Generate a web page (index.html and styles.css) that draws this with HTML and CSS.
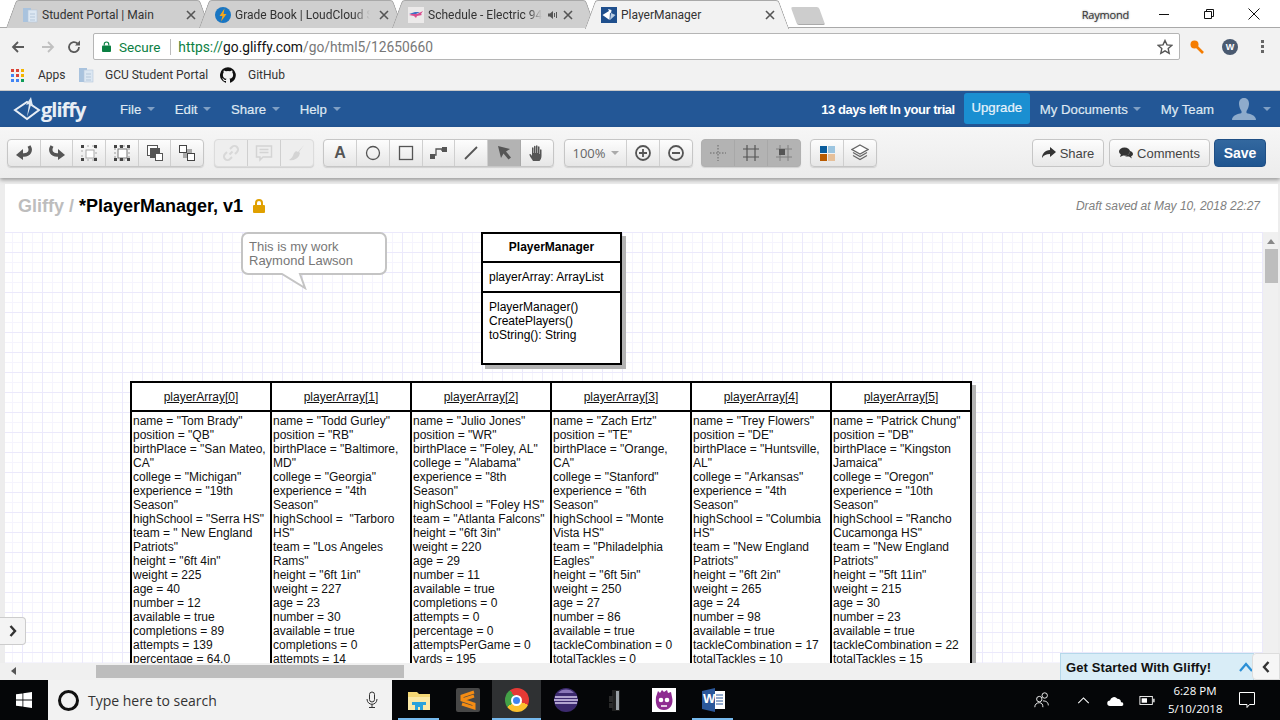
FILE: index.html
```html
<!DOCTYPE html>
<html>
<head>
  <title>PlayerManager</title>
  <link rel="stylesheet" href="styles.css">
</head>
<body>
  <div id="app">
    <div class="tabstrip">
      <div class="tab">
        <svg class="favicon" viewBox="0 0 16 16"><rect x="1" y="1" width="8" height="14" fill="#a9c3de"/><rect x="6" y="3" width="9" height="12" fill="#dce7f2" stroke="#b5c7da" stroke-width=".6"/><path d="M8 7h5M8 10h5M8 13h5" stroke="#b5c7da"/></svg>
        <span class="tab-title">Student Portal | Main</span>
        <svg class="tab-x" viewBox="0 0 10 10"><path d="M1 1l8 8M9 1l-8 8"/></svg>
      </div>
      <div class="tab">
        <svg class="favicon" viewBox="0 0 16 16"><circle cx="8" cy="8" r="8" fill="#1a76c2"/><path d="M9.500 1.500L4.500 9h3l-1.500 5.500L11.500 7h-3z" fill="#f6a71b"/></svg>
        <span class="tab-title tab-fade">Grade Book | LoudCloud S</span>
        <svg class="tab-x" viewBox="0 0 10 10"><path d="M1 1l8 8M9 1l-8 8"/></svg>
      </div>
      <div class="tab">
        <svg class="favicon" viewBox="0 0 16 16"><rect width="16" height="16" fill="#eceaea"/><path d="M1 8l5-2 3 1 6-3-2 3 1 1-5 1-1 2-2-2z" fill="#d84f8f"/><path d="M1 7l6-2 5 0-4 2z" fill="#3f6fc4"/></svg>
        <span class="tab-title tab-fade tab-title-short">Schedule - Electric 94.</span>
        <svg class="tab-audio" viewBox="0 0 10 10"><path d="M0 3.500h2L5 1v8L2 6.500H0z"/><path d="M6.500 3v4M8.500 2v6" stroke="#555"/></svg>
        <svg class="tab-x" viewBox="0 0 10 10"><path d="M1 1l8 8M9 1l-8 8"/></svg>
      </div>
      <div class="tab tab-active">
        <svg class="favicon" viewBox="0 0 16 16"><rect width="16" height="16" fill="#1f4f8d"/><path d="M1.500 8L8 4l-1-2 3.500 1L10 6.500 9 5.500 8.500 13z" fill="#fff"/><path d="M10 6l4.500 2L9 13z" fill="#b9cde3"/></svg>
        <span class="tab-title">PlayerManager</span>
        <svg class="tab-x" viewBox="0 0 10 10"><path d="M1 1l8 8M9 1l-8 8"/></svg>
      </div>
      <div class="newtab"></div>
      <div class="winbar">
        <span class="profile">Raymond</span>
        <span class="winbtn"><svg viewBox="0 0 12 12"><path d="M1 6.500h10"/></svg></span>
        <span class="winbtn"><svg viewBox="0 0 12 12"><path d="M1.500 3.500h7v7h-7zM3.500 3.500v-2h7v7h-2"/></svg></span>
        <span class="winbtn"><svg viewBox="0 0 12 12"><path d="M.5.5l11 11M11.500.5l-11 11"/></svg></span>
      </div>
    </div>

    <div class="omnibar">
      <svg class="nav-ico" viewBox="0 0 16 16"><path d="M14 8H3M8 3L3 8l5 5" class="ln-dark"/></svg>
      <svg class="nav-ico" viewBox="0 0 16 16"><path d="M2 8h11M8 3l5 5-5 5" class="ln-light"/></svg>
      <svg class="nav-ico nav-reload" viewBox="0 0 16 16"><path d="M13 8a5 5 0 1 1-1.500-3.500" class="ln-dark"/><path d="M14 1.500v5h-5z" fill="#5a5a5a"/></svg>
      <div class="address">
        <svg class="lock-ico" viewBox="0 0 10 12"><path d="M2.500 5V3.500a2.500 2.500 0 0 1 5 0V5" fill="none" stroke="#0b8043" stroke-width="1.300"/><rect y="5" width="10" height="7" rx="1" fill="#0b8043"/></svg>
        <span class="secure">Secure</span>
        <span class="addr-sep"></span>
        <span class="url"><span class="url-green">https://</span>go.gliffy.com<span class="url-dim">/go/html5/12650660</span></span>
        <svg class="star-ico" viewBox="0 0 16 16"><path d="M8 1.500l2 4.400 4.800.5-3.600 3.200 1 4.700L8 11.900l-4.200 2.400 1-4.700L1.200 6.400 6 5.900z"/></svg>
      </div>
      <svg class="ext-ico" viewBox="0 0 16 16"><circle cx="5.500" cy="5.500" r="4" fill="#f57c00"/><path d="M7 7l7 7" stroke="#f57c00" stroke-width="2.600"/></svg>
      <span class="ext-w">W</span>
      <span class="dots"><i></i><i></i><i></i></span>
    </div>

    <div class="bookmarks">
      <span class="apps-grid"><i class="c1"></i><i class="c2"></i><i class="c3"></i><i class="c4"></i><i class="c5"></i><i class="c6"></i><i class="c7"></i><i class="c8"></i><i class="c9"></i></span>
      <span class="bm bm-apps">Apps</span>
      <svg class="favicon" viewBox="0 0 16 16"><rect x="1" y="1" width="8" height="14" fill="#a9c3de"/><rect x="6" y="3" width="9" height="12" fill="#dce7f2" stroke="#b5c7da" stroke-width=".6"/><path d="M8 7h5M8 10h5M8 13h5" stroke="#b5c7da"/></svg>
      <span class="bm bm-gcu">GCU Student Portal</span>
      <svg class="favicon" viewBox="0 0 16 16"><path d="M8 .2a8 8 0 0 0-2.500 15.600c.4.100.5-.2.500-.4v-1.400c-2.200.5-2.700-1-2.700-1-.4-.9-.9-1.200-.9-1.200-.7-.5.100-.5.100-.5.800.100 1.200.8 1.200.8.700 1.200 1.900.9 2.300.7.100-.5.300-.9.500-1.100-1.800-.2-3.600-.9-3.600-4 0-.9.300-1.600.8-2.100-.1-.2-.4-1 .1-2.100 0 0 .7-.2 2.200.8a7.600 7.600 0 0 1 4 0c1.500-1 2.200-.8 2.200-.8.500 1.100.2 1.900.1 2.100.5.600.8 1.300.8 2.100 0 3.100-1.900 3.700-3.700 3.900.3.300.6.700.6 1.500v2.200c0 .2.100.5.600.4A8 8 0 0 0 8 .2z" fill="#111"/></svg>
      <span class="bm bm-git">GitHub</span>
    </div>

    <div class="gnav">
      <svg class="glogo" viewBox="0 0 28 28"><path d="M2 15L14 7l12 8-12 9z" fill="none" stroke="#e8eef5" stroke-width="2"/><path d="M14 22l2-13-3 1 5-8 2 9-2-1z" fill="#dfe8f2"/></svg>
      <span class="gword">gliffy</span>
      <span class="gmenu gm-file">File<i class="caret"></i></span>
      <span class="gmenu gm-next">Edit<i class="caret"></i></span>
      <span class="gmenu gm-next">Share<i class="caret"></i></span>
      <span class="gmenu gm-next">Help<i class="caret"></i></span>
      <span class="trial">13 days left In your trial</span>
      <span class="upgrade">Upgrade</span>
      <span class="gmenu">My Documents<i class="caret caret-docs"></i></span>
      <span class="gmenu gm-team">My Team</span>
      <svg class="user-ico" viewBox="0 0 24 22"><path d="M12 0c3.500 0 5 2.500 5 5.500S15.500 12 14.500 13v2c3 1 9.500 2 9.500 7H0c0-5 6.500-6 9.500-7v-2C8.500 12 7 8.500 7 5.500S8.500 0 12 0z" fill="#8eabcb"/></svg>
      <i class="caret"></i>
    </div>

    <div class="tools">
      <div class="bgroup g-edit">
        <span class="btn"><svg viewBox="0 0 18 18" class="ico"><path d="M14 2c3 5 0 9-5 9H7" fill="none" stroke="#555" stroke-width="3.400"/><path d="M8 5v11l-7-5z" fill="#555"/></svg></span>
        <span class="btn"><svg viewBox="0 0 18 18" class="ico"><path d="M4 2c-3 5 0 9 5 9h2" fill="none" stroke="#555" stroke-width="3.400"/><path d="M10 5v11l7-5z" fill="#555"/></svg></span>
        <span class="btn"><svg viewBox="0 0 18 18" class="ico"><path d="M2 2h14v14H2z" fill="none" stroke="#aaa" stroke-dasharray="2 3"/><rect x="6" y="6" width="8" height="8" fill="#fff" stroke="#aaa"/><path d="M1 1h3v3H1zM14 1h3v3h-3zM1 14h3v3H1zM14 14h3v3h-3z" fill="#444"/></svg></span>
        <span class="btn"><svg viewBox="0 0 18 18" class="ico"><path d="M2 2h14v14H2z" fill="none" stroke="#999" stroke-dasharray="2 2"/><rect x="5" y="5" width="9" height="9" fill="#fff" stroke="#777"/><path d="M1 1h3v3H1zM14 1h3v3h-3zM1 14h3v3H1zM14 14h3v3h-3zM7 1h3v3H7zM7 14h3v3H7z" fill="#444"/></svg></span>
        <span class="btn"><svg viewBox="0 0 18 18" class="ico"><rect x="1.500" y="1.500" width="10" height="10" fill="#fff" stroke="#555"/><rect x="4" y="4" width="10" height="10" fill="#555"/><rect x="9.500" y="9.500" width="7" height="7" fill="#fff" stroke="#555"/></svg></span>
        <span class="btn"><svg viewBox="0 0 18 18" class="ico"><rect x="5" y="5" width="9" height="9" fill="#aaa"/><rect x="1.500" y="1.500" width="7" height="7" fill="#fff" stroke="#444"/><rect x="9.500" y="9.500" width="7" height="7" fill="#fff" stroke="#444"/></svg></span>
      </div>
      <div class="bgroup g-disabled">
        <span class="btn"><svg viewBox="0 0 18 18" class="ico"><path d="M7.500 10.500l3-3M8 5l2-2a3 3 0 0 1 5 5l-2 2M10 13l-2 2a3 3 0 0 1-5-5l2-2" fill="none" stroke="#d8d8d8" stroke-width="2"/></svg></span>
        <span class="btn"><svg viewBox="0 0 18 18" class="ico"><path d="M1.500 2h15v11H8l-3 3v-3H1.500z" fill="none" stroke="#d4d4d4" stroke-width="1.500"/><path d="M4.500 5.500h9M4.500 8.500h9" stroke="#d4d4d4" stroke-width="1.300"/></svg></span>
        <span class="btn"><svg viewBox="0 0 18 18" class="ico"><path d="M16 1l-6 7-2-1-2 2c-1 3-2 5-5 7 4 1 8-1 10-4l1-3-1-1z" fill="#d4d4d4"/></svg></span>
      </div>
      <div class="bgroup g-shapes">
        <span class="btn btn-a">A</span>
        <span class="btn"><svg viewBox="0 0 18 18" class="ico"><circle cx="9" cy="9" r="6.500" fill="none" stroke="#555" stroke-width="1.300"/></svg></span>
        <span class="btn"><svg viewBox="0 0 18 18" class="ico"><rect x="2.500" y="2.500" width="13" height="13" fill="none" stroke="#555" stroke-width="1.300"/></svg></span>
        <span class="btn"><svg viewBox="0 0 18 18" class="ico"><path d="M1 11h5V5h6v2" fill="none" stroke="#555" stroke-width="1.300"/><rect y="10" width="5" height="5" fill="#555"/><rect x="12" y="3" width="5" height="5" fill="#555"/></svg></span>
        <span class="btn"><svg viewBox="0 0 18 18" class="ico"><path d="M3 15L15 3" stroke="#555" stroke-width="1.800"/></svg></span>
        <span class="btn btn-on"><svg viewBox="0 0 18 18" class="ico"><path d="M3 2l12 3-4 2.500 5 6-2.500 2-5-6L6 14z" fill="#555"/></svg></span>
        <span class="btn"><svg viewBox="0 0 18 18" class="ico"><path d="M5 17c-1-2-3-4-3.500-6-.3-1 .8-1.500 1.500-.5L4 12V4c0-1 1.500-1 1.500 0v5h.5V2.500c0-1 1.500-1 1.500 0V9H8V2c0-1 1.500-1 1.500 0v7h.5V3c0-1 1.500-1 1.500 0v7h.5V6c0-1 1.500-1 1.500 0v6c0 2-1 4-2 5z" fill="#555"/></svg></span>
      </div>
      <div class="bgroup g-zoom">
        <span class="btn btn-pct">100%<i class="caret caret-grey"></i></span>
        <span class="btn"><svg viewBox="0 0 18 18" class="ico"><circle cx="9" cy="9" r="7" fill="none" stroke="#555" stroke-width="1.800"/><path d="M5 9h8M9 5v8" stroke="#555" stroke-width="1.800"/></svg></span>
        <span class="btn"><svg viewBox="0 0 18 18" class="ico"><circle cx="9" cy="9" r="7" fill="none" stroke="#555" stroke-width="1.800"/><path d="M5 9h8" stroke="#555" stroke-width="1.800"/></svg></span>
      </div>
      <div class="bgroup g-snap">
        <span class="btn btn-on"><svg viewBox="0 0 18 18" class="ico"><path d="M1 9h16M9 1v16" stroke="#666" stroke-dasharray="1.500 1.500"/></svg></span>
        <span class="btn btn-on"><svg viewBox="0 0 18 18" class="ico"><path d="M1 5h16M1 13h16M5 1v16M13 1v16" stroke="#555" stroke-width="1.200"/></svg></span>
        <span class="btn btn-on"><svg viewBox="0 0 18 18" class="ico"><path d="M1 5h16M1 13h16M5 1v16M13 1v16" stroke="#808080"/><rect x="4" y="5" width="6" height="6" fill="#555"/></svg></span>
      </div>
      <div class="bgroup g-style">
        <span class="btn"><span class="swatches"><i class="s1"></i><i class="s2"></i><i class="s3"></i><i class="s4"></i></span></span>
        <span class="btn"><svg viewBox="0 0 18 18" class="ico"><path d="M9 1l8 4.500-8 4.500-8-4.500z" fill="#fff" stroke="#666" stroke-width="1.200"/><path d="M2 8.500l7 4 7-4M2 11.500l7 4 7-4" fill="none" stroke="#666" stroke-width="1.200"/></svg></span>
      </div>
      <div class="tools-right">
        <span class="tbtn tb-share"><svg viewBox="0 0 14 12" class="tico"><path d="M8 0l6 5-6 5V7C4 7 2 8 0 11c0-4 3-8 8-8z" fill="#333"/></svg>Share</span>
        <span class="tbtn tb-comments"><svg viewBox="0 0 14 12" class="tico"><ellipse cx="5.500" cy="4.500" rx="5.500" ry="4" fill="#333"/><path d="M2 7L1 10l4-2zM11 4c2 .5 3 2 3 3s-1 2-2 2.500l1 2-3-2c-2 0-4 0-5-1 4 0 6-2 6-4.500z" fill="#333"/></svg>Comments</span>
        <span class="tbtn tb-save">Save</span>
      </div>
    </div>

    <div class="workspace">
      <div class="panel">
        <div class="doc-head">
          <span class="crumb">Gliffy /</span>
          <span class="doc-name">*PlayerManager, v1</span>
          <svg class="doc-lock" viewBox="0 0 12 14"><path d="M3 6V4a3 3 0 0 1 6 0v2" fill="none" stroke="#e0a000" stroke-width="2"/><rect y="6" width="12" height="8" rx="1" fill="#e0a000"/></svg>
          <span class="draft">Draft saved at May 10, 2018 22:27</span>
        </div>
        <div class="canvas-row">
          <div class="canvas">
            <div class="bubble">
              <svg class="bubble-shape" viewBox="0 0 148 58"><path d="M7 1h132a6 6 0 0 1 6 6v29a6 6 0 0 1-6 6H59l5 14L41 42H7a6 6 0 0 1-6-6V7a6 6 0 0 1 6-6z" fill="#fff" stroke="#c4c4c4" stroke-width="2"/></svg>
              <span class="bubble-text">This is my work<br>Raymond Lawson</span>
            </div>

            <div class="uml">
              <div class="uml-title">PlayerManager</div>
              <div class="uml-attrs">playerArray: ArrayList</div>
              <div class="uml-methods">PlayerManager()<br>CreatePlayers()<br>toString(): String</div>
            </div>

            <div class="objects">
              <div class="obj">
                <div class="obj-head">playerArray[0]</div>
                <div class="obj-body">
                  <p>name = "Tom Brady"</p><p>position = "QB"</p><p>birthPlace = "San Mateo, CA"</p><p>college = "Michigan"</p><p>experience = "19th Season"</p><p>highSchool = "Serra HS"</p><p>team = " New England Patriots"</p><p>height = "6ft 4in"</p><p>weight = 225</p><p>age = 40</p><p>number = 12</p><p>available = true</p><p>completions = 89</p><p>attempts = 139</p><p>percentage = 64.0</p>
                </div>
              </div>
              <div class="obj">
                <div class="obj-head">playerArray[1]</div>
                <div class="obj-body">
                  <p>name = "Todd Gurley"</p><p>position = "RB"</p><p>birthPlace = "Baltimore, MD"</p><p>college = "Georgia"</p><p>experience = "4th Season"</p><p>highSchool = &nbsp;"Tarboro HS"</p><p>team = "Los Angeles Rams"</p><p>height = "6ft 1in"</p><p>weight = 227</p><p>age = 23</p><p>number = 30</p><p>available = true</p><p>completions = 0</p><p>attempts = 14</p>
                </div>
              </div>
              <div class="obj">
                <div class="obj-head">playerArray[2]</div>
                <div class="obj-body">
                  <p>name = "Julio Jones"</p><p>position = "WR"</p><p>birthPlace = "Foley, AL"</p><p>college = "Alabama"</p><p>experience = "8th Season"</p><p>highSchool = "Foley HS"</p><p>team = "Atlanta Falcons"</p><p>height = "6ft 3in"</p><p>weight = 220</p><p>age = 29</p><p>number = 11</p><p>available = true</p><p>completions = 0</p><p>attempts = 0</p><p>percentage = 0</p><p>attemptsPerGame = 0</p><p>yards = 195</p>
                </div>
              </div>
              <div class="obj">
                <div class="obj-head">playerArray[3]</div>
                <div class="obj-body">
                  <p>name = "Zach Ertz"</p><p>position = "TE"</p><p>birthPlace = "Orange, CA"</p><p>college = "Stanford"</p><p>experience = "6th Season"</p><p>highSchool = "Monte Vista HS"</p><p>team = "Philadelphia Eagles"</p><p>height = "6ft 5in"</p><p>weight = 250</p><p>age = 27</p><p>number = 86</p><p>available = true</p><p>tackleCombination = 0</p><p>totalTackles = 0</p>
                </div>
              </div>
              <div class="obj">
                <div class="obj-head">playerArray[4]</div>
                <div class="obj-body">
                  <p>name = "Trey Flowers"</p><p>position = "DE"</p><p>birthPlace = "Huntsville, AL"</p><p>college = "Arkansas"</p><p>experience = "4th Season"</p><p>highSchool = "Columbia HS"</p><p>team = "New England Patriots"</p><p>height = "6ft 2in"</p><p>weight = 265</p><p>age = 24</p><p>number = 98</p><p>available = true</p><p>tackleCombination = 17</p><p>totalTackles = 10</p>
                </div>
              </div>
              <div class="obj">
                <div class="obj-head">playerArray[5]</div>
                <div class="obj-body">
                  <p>name = "Patrick Chung"</p><p>position = "DB"</p><p>birthPlace = "Kingston Jamaica"</p><p>college = "Oregon"</p><p>experience = "10th Season"</p><p>highSchool = "Rancho Cucamonga HS"</p><p>team = "New England Patriots"</p><p>height = "5ft 11in"</p><p>weight = 215</p><p>age = 30</p><p>number = 23</p><p>available = true</p><p>tackleCombination = 22</p><p>totalTackles = 15</p>
                </div>
              </div>
            </div>
          </div>
          <div class="vscroll"><i class="arrow-up"></i><div class="vthumb"></div></div>
        </div>
      </div>
    </div>

    <div class="hscroll"><i class="arrow-left"></i><div class="hthumb"></div></div>

    <div class="side-toggle"><svg viewBox="0 0 8 12"><path d="M1.500 1l4.500 5-4.500 5" fill="none" stroke="#333" stroke-width="2.400"/></svg></div>
    <div class="started">
      <span>Get Started With Gliffy!</span>
      <svg class="started-up" viewBox="0 0 14 10"><path d="M1 9l6-7 6 7" fill="none" stroke="#2a8fd6" stroke-width="2.200"/></svg>
    </div>
    <div class="started-close"><svg viewBox="0 0 8 12"><path d="M6.500 1L2 6l4.500 5" fill="none" stroke="#333" stroke-width="2.400"/></svg></div>

    <div class="taskbar">
      <div class="startbtn"><svg viewBox="0 0 16 16"><path d="M0 2.300l6.500-.9v6.200H0zM7.300 1.300L16 0v7.600H7.300zM0 8.400h6.500v6.200L0 13.700zM7.300 8.400H16V16l-8.700-1.300z" fill="#fff"/></svg></div>
      <div class="search">
        <span class="cortana"></span>
        <span class="search-text">Type here to search</span>
        <svg class="mic" viewBox="0 0 12 18"><rect x="3.500" y="1" width="5" height="10" rx="2.500" fill="none" stroke="#333"/><path d="M1 8c0 7 10 7 10 0M6 13v3M3 16.500h6" fill="none" stroke="#333"/></svg>
      </div>
      <div class="tb-apps">
        <span class="tbapp tbapp-open">
          <svg viewBox="0 0 24 24"><path d="M1 4h9l2 2h11v16H1z" fill="#f4d774"/><path d="M1 9h22v13H1z" fill="#fbe9a7"/><path d="M8 22v-6h8v6h-3v-3h-2v3z" fill="#29a3dc"/><rect x="5" y="14" width="14" height="3" fill="#29a3dc"/></svg>
        </span>
        <span class="tbapp">
          <svg viewBox="0 0 24 24"><rect width="24" height="24" rx="2" fill="#474747"/><path d="M18 4L6 8v4l12 4v4L6 16M6 12l12-4" fill="none" stroke="#f48c14" stroke-width="3"/></svg>
        </span>
        <span class="tbapp tbapp-active"><span class="chrome-ico"><i></i></span></span>
        <span class="tbapp">
          <svg viewBox="0 0 24 24"><circle cx="12" cy="12" r="12" fill="#3c2a6e"/><path d="M1 9h22M0 12h24M1 15h22" stroke="#d8cdf0" stroke-width="1.300"/><path d="M4 5a11 11 0 0 1 16 0z" fill="#8a77b8"/></svg>
        </span>
        <span class="tbapp">
          <svg viewBox="0 0 24 24"><rect x="9" y="2" width="8" height="21" fill="#202020"/><rect x="13" y="3" width="3" height="19" fill="#9aa0a5"/><rect x="6" y="8" width="4" height="6" fill="#2a2a2a"/><rect x="6" y="15" width="4" height="5" fill="#2a2a2a"/></svg>
        </span>
        <span class="tbapp">
          <svg viewBox="0 0 24 24"><rect width="24" height="24" fill="#fff"/><path d="M4 9l2-6 2 2 2-3 2 2 3-2 1 3 3-1 1 5c2 7-2 13-8 13S3 18 4 9z" fill="#8e2b91"/><circle cx="9" cy="12" r="2.300" fill="#fff"/><circle cx="15" cy="12" r="2.300" fill="#fff"/><path d="M9 18h6" stroke="#fff" stroke-width="1.500"/></svg>
        </span>
        <span class="tbapp tbapp-open word-tile">
          <svg viewBox="0 0 24 24"><rect x="9" y="3" width="15" height="18" fill="#fff"/><path d="M15 7h7M15 10h7M15 13h7M15 16h7" stroke="#2b579a"/><path d="M1 3l13-3v24L1 21z" fill="#2b579a"/></svg>
          <span class="word-w">W</span>
        </span>
      </div>
      <div class="tray">
        <span class="tray-item ti-people"><svg viewBox="0 0 20 20"><circle cx="7" cy="9" r="3" fill="none" stroke="#fff"/><circle cx="13" cy="5" r="3" fill="none" stroke="#fff"/><path d="M2 18c0-3 2-5 5-5s4 2 4 5M11 11c3 0 6 1 6 5" fill="none" stroke="#fff"/></svg></span>
        <span class="tray-item ti-caret"><svg viewBox="0 0 14 8"><path d="M1 7l6-6 6 6" fill="none" stroke="#fff" stroke-width="1.200"/></svg></span>
        <span class="tray-item ti-cloud"><svg viewBox="0 0 18 12"><path d="M3 12a3 3 0 0 1 0-6 4.500 4.500 0 0 1 8-2 4 4 0 0 1 4 4 2 2 0 0 1 1 4z" fill="#fff"/></svg></span>
        <span class="tray-item ti-batt"><svg viewBox="0 0 18 12"><rect x="1" y="1.500" width="14" height="9" fill="none" stroke="#fff"/><rect x="3" y="3.500" width="6" height="5" fill="#fff"/><rect x="16" y="4" width="1.500" height="4" fill="#fff"/></svg></span>
        <span class="clock">6:28 PM<br>5/10/2018</span>
        <span class="tray-item ti-notif"><svg viewBox="0 0 18 18"><path d="M1.500 1.500h15v12h-5l-2.500 3v-3H1.500z" fill="none" stroke="#fff"/></svg></span>
      </div>
    </div>
  </div>
</body>
</html>
```
FILE: styles.css
```css
* {
  box-sizing: border-box;
}
body {
  margin: 0;
  font-family: "Liberation Sans", Arial, sans-serif;
  overflow: hidden;
}
#app {
  position: relative;
  display: flex;
  flex-direction: column;
  width: 1280px;
  height: 720px;
  overflow: hidden;
  background: #fff;
}

/* browser tabs */
.tabstrip {
  position: relative;
  display: flex;
  height: 28px;
  flex: none;
  padding-left: 6px;
  background: #fff;
  border-bottom: 1px solid #a9a9a9;
}
.tab {
  position: relative;
  width: 204px;
  height: 28px;
  margin-right: -11px;
  padding: 1px 0 0 16px;
  display: flex;
  align-items: center;
  font-family: Roboto, sans-serif;
  font-size: 12px;
  color: #333;
}
.tab::before, .tab::after {
  content: "";
  position: absolute;
  top: 0;
  bottom: 0;
  width: 55%;
  background: #cfcfcf;
  border-top: 1px solid #a9a9a9;
}
.tab::before {
  left: 5px;
  transform: skewX(-20deg);
  border-left: 1px solid #a0a0a0;
  border-radius: 3px 0 0 0;
}
.tab::after {
  right: 5px;
  transform: skewX(20deg);
  border-right: 1px solid #a0a0a0;
  border-radius: 0 3px 0 0;
}
.tab > * {
  position: relative;
  z-index: 1;
}
.tab-active {
  z-index: 2;
  height: 29px;
}
.tab-active::before, .tab-active::after {
  background: #f2f2f2;
}
.favicon {
  width: 16px;
  height: 16px;
  flex: none;
}
.tab-title {
  width: 135px;
  margin-left: 4px;
  white-space: nowrap;
}
.tab-fade {
  -webkit-mask-image: linear-gradient(to right, #000 88%, transparent);
  mask-image: linear-gradient(to right, #000 88%, transparent);
}
.tab-title-short {
  width: 114px;
}
.tab-audio {
  width: 10px;
  height: 10px;
  margin-left: 6px;
  margin-right: 5px;
  fill: #555;
}
.tab-x {
  width: 10px;
  height: 10px;
  margin-left: 9px;
  fill: none;
  stroke: #555;
  stroke-width: 1.600;
}
.tab-audio + .tab-x {
  margin-left: 0;
}
.newtab {
  width: 28px;
  height: 18px;
  margin: 7px 0 0 16px;
  background: #cdcdcd;
  border-bottom: 1px solid #aaa;
  border-radius: 2px;
  transform: skewX(20deg);
}
.winbar {
  margin-left: auto;
  display: flex;
  align-items: flex-start;
  padding-right: 4px;
}
.profile {
  margin: 7px 12px 0 0;
  font-family: "Open Sans", sans-serif;
  font-size: 11px;
  letter-spacing: -0.2px;
  color: #333;
  text-shadow: 0 0 2px #888;
}
.winbtn {
  width: 45px;
  height: 28px;
  display: flex;
  justify-content: center;
  padding-top: 8px;
}
.winbtn svg {
  width: 12px;
  height: 12px;
  fill: none;
  stroke: #111;
  stroke-width: 1;
}

/* address bar */
.omnibar {
  height: 32px;
  flex: none;
  display: flex;
  align-items: center;
  padding: 5px 0 0 10px;
  background: #f2f2f2;
}
.nav-ico {
  width: 16px;
  height: 16px;
  margin-right: 14px;
  fill: none;
}
.nav-reload {
  margin-left: -4px;
}
.ln-dark {
  fill: none;
  stroke: #5a5a5a;
  stroke-width: 1.800;
}
.ln-light {
  fill: none;
  stroke: #c0c0c0;
  stroke-width: 1.800;
}
.address {
  width: 1087px;
  height: 27px;
  margin: 0 0 0 -3px;
  display: flex;
  align-items: center;
  padding: 0 6px 0 8px;
  background: #fff;
  border: 1px solid #b5b5b5;
  border-radius: 2px;
  font-family: Roboto, sans-serif;
  font-size: 13px;
}
.lock-ico {
  width: 9px;
  height: 11px;
  margin-right: 8px;
}
.secure {
  color: #0b8043;
  font-size: 13.500px;
}
.addr-sep {
  width: 1px;
  height: 16px;
  margin: 0 7px 0 10px;
  background: #bbb;
}
.url {
  color: #111;
  font-size: 13.800px;
}
.url-green {
  color: #0b8043;
}
.url-dim {
  color: #777;
}
.star-ico {
  width: 16px;
  height: 16px;
  margin-left: auto;
  margin-right: 0;
  fill: none;
  stroke: #555;
  stroke-width: 1.400;
}
.ext-ico {
  width: 16px;
  height: 16px;
  margin-left: 9px;
}
.ext-w {
  width: 16px;
  height: 16px;
  margin-left: 17px;
  border-radius: 50%;
  background: #4a5a70;
  color: #fff;
  font-size: 9px;
  font-weight: bold;
  line-height: 16px;
  text-align: center;
}
.dots {
  display: flex;
  flex-direction: column;
  gap: 2px;
  margin-left: 23px;
}
.dots i {
  width: 3px;
  height: 3px;
  background: #666;
}

/* bookmarks */
.bookmarks {
  height: 31px;
  flex: none;
  display: flex;
  align-items: center;
  padding-left: 11px;
  background: #f2f2f2;
  font-family: Roboto, sans-serif;
  font-size: 12px;
  color: #333;
  border-bottom: 1px solid #c8c8c8;
}
.apps-grid {
  display: grid;
  grid-template-columns: repeat(3, 3px);
  gap: 2px;
  margin-right: 14px;
}
.apps-grid i {
  height: 3px;
}
.c1, .c2, .c5 { background: #db4437; }
.c3, .c6 { background: #f4b400; }
.c4, .c7, .c8 { background: #4285f4; }
.c9 { background: #0f9d58; }
.bm-apps {
  width: 40px;
}
.bm-gcu {
  width: 115px;
  margin-left: 11px;
}
.bm-git {
  margin-left: 12px;
}

/* gliffy nav */
.gnav {
  height: 36px;
  flex: none;
  display: flex;
  align-items: center;
  background: #235796;
  color: #dfe8f2;
  font-size: 13.200px;
}
.glogo {
  width: 28px;
  height: 28px;
  margin-left: 13px;
}
.gword {
  width: 45px;
  font-family: "Open Sans", sans-serif;
  font-size: 20px;
  font-weight: 700;
  letter-spacing: -1px;
  color: #e8eef5;
}
.gmenu {
  display: flex;
  align-items: center;
  -webkit-text-stroke: 0.2px #dfe8f2;
}
.caret {
  width: 0;
  height: 0;
  margin-left: 6px;
  border: 4px solid transparent;
  border-top-color: #7f9fc4;
  border-bottom-width: 0;
}
.gm-file { margin-left: 34px; }
.gm-next { margin-left: 19.500px; }
.trial {
  margin-left: auto;
  font-size: 13px;
  font-weight: bold;
  color: #fff;
  letter-spacing: -0.45px;
}
.upgrade {
  width: 66px;
  height: 31px;
  margin: -1px 10px 0 9px;
  background: #1a8fd1;
  border-radius: 3px;
  line-height: 30px;
  text-align: center;
  color: #e8f3fb;
  -webkit-text-stroke: 0.2px #e8f3fb;
}
.caret-docs { margin-left: 5px; }
.gm-team { margin-left: 20px; }
.user-ico {
  width: 24px;
  height: 22px;
  margin-left: 18px;
}
.gnav > .caret {
  margin: 0 9px 0 7px;
}

/* editor toolbar */
.tools {
  position: relative;
  z-index: 1;
  height: 51px;
  flex: none;
  display: flex;
  align-items: flex-start;
  padding: 12px 14px 0 7px;
  background: linear-gradient(#f6f6f6, #ececec);
  box-shadow: 0 2px 4px rgba(0, 0, 0, 0.35);
}
.bgroup {
  display: flex;
  height: 28px;
  flex: none;
  background: linear-gradient(#fdfdfd, #e6e6e6);
  border: 1px solid #c6c6c6;
  border-radius: 4px;
  box-shadow: 0 1px 1px rgba(0, 0, 0, 0.12);
  overflow: hidden;
}
.g-edit { width: 197px; margin-right: 10px; }
.g-disabled { width: 100px; margin-right: 9px; background: #eeeeee; border-color: #dcdcdc; }
.g-shapes { width: 231px; margin-right: 10px; }
.g-zoom { width: 129px; margin-right: 8px; }
.g-snap { width: 100px; margin-right: 9px; background: #b3b3b3; border-color: #b0b0b0; }
.g-style { width: 67px; }
.btn {
  flex: 1;
  display: flex;
  align-items: center;
  justify-content: center;
  border-right: 1px solid #cfcfcf;
}
.btn:last-child {
  border-right: 0;
}
.btn-on {
  background: #b3b3b3;
  border-right-color: #a8a8a8;
}
.ico {
  width: 18px;
  height: 18px;
}
.btn-a {
  font-size: 16px;
  font-weight: bold;
  color: #555;
}
.g-zoom .btn-pct {
  flex: none;
  width: 62px;
  font-family: "Open Sans", sans-serif;
  font-size: 13px;
  color: #666;
}
.caret-grey {
  margin-left: 5px;
  border-top-color: #aaa;
}
.swatches {
  display: grid;
  grid-template-columns: 7px 7px;
  grid-auto-rows: 7px;
  gap: 1px;
}
.s1 { background: #0a5c9c; }
.s2 { background: #9cc5e0; }
.s3 { background: #b85a00; }
.s4 { background: #e6c09a; }
.tools-right {
  margin-left: auto;
  display: flex;
  gap: 5px;
}
.tbtn {
  height: 28px;
  display: flex;
  align-items: center;
  justify-content: center;
  gap: 4px;
  background: linear-gradient(#fdfdfd, #e8e8e8);
  border: 1px solid #c6c6c6;
  border-radius: 4px;
  font-size: 13px;
  color: #444;
}
.tico {
  width: 14px;
  height: 12px;
}
.tb-share { width: 72px; }
.tb-comments { width: 101px; }
.tb-save {
  width: 52px;
  margin-left: -1px;
  background: linear-gradient(#33689f, #1f5590);
  border-color: #1f4f85;
  color: #fff;
  font-size: 14px;
  font-weight: bold;
}

/* document */
.workspace {
  height: 485px;
  flex: none;
  padding: 6px 2px 0 5px;
  background: #ededed;
}
.panel {
  height: 100%;
  display: flex;
  flex-direction: column;
  background: #fff;
}
.doc-head {
  height: 48px;
  flex: none;
  display: flex;
  align-items: center;
  padding: 0 18px 4px 13px;
}
.crumb {
  font-size: 18px;
  font-weight: bold;
  color: #bdbdbd;
  margin-right: 5px;
}
.doc-name {
  font-size: 18px;
  font-weight: bold;
  color: #000;
}
.doc-lock {
  width: 12px;
  height: 14px;
  margin-left: 10px;
}
.draft {
  margin-left: auto;
  font-size: 12px;
  font-style: italic;
  color: #808080;
}
.canvas-row {
  flex: 1;
  display: flex;
  min-height: 0;
}
.canvas {
  position: relative;
  flex: 1;
  overflow: hidden;
  background-color: #fff;
  background-image:
    linear-gradient(#ebe9fb 1px, transparent 1px),
    linear-gradient(90deg, #ebe9fb 1px, transparent 1px),
    linear-gradient(#f5f4fd 1px, transparent 1px),
    linear-gradient(90deg, #f5f4fd 1px, transparent 1px);
  background-size: 20px 20px, 20px 20px, 10px 10px, 10px 10px;
  background-position: 17px 0, 17px 0, 7px 0, 7px 0;
}
.vscroll {
  position: relative;
  width: 15px;
  flex: none;
  background: #f0f0f0;
}
.arrow-up {
  position: absolute;
  top: 7px;
  left: 4px;
  border: 4px solid transparent;
  border-top-width: 0;
  border-bottom: 5px solid #888;
}
.vthumb {
  width: 13px;
  height: 34px;
  margin: 17px 0 0 2px;
  background: #bdbdbd;
}

/* diagram nodes */
.bubble {
  position: absolute;
  left: 236px;
  top: 0;
  width: 148px;
  height: 58px;
}
.bubble-shape {
  position: absolute;
  inset: 0;
  width: 148px;
  height: 58px;
}
.bubble-text {
  position: absolute;
  left: 8px;
  top: 8px;
  font-size: 13px;
  line-height: 13.500px;
  color: #777;
}
.uml {
  position: absolute;
  left: 476px;
  top: 0;
  width: 141px;
  height: 133px;
  background: #fff;
  border: 2px solid #000;
  box-shadow: 4px 4px 0 #b3b3b3;
  font-size: 12px;
  color: #000;
}
.uml-title {
  height: 29px;
  border-bottom: 2px solid #000;
  font-weight: bold;
  line-height: 27px;
  text-align: center;
}
.uml-attrs {
  height: 30px;
  padding-left: 6px;
  border-bottom: 2px solid #000;
  line-height: 28px;
}
.uml-methods {
  padding: 7px 0 0 6px;
  line-height: 14px;
}
.objects {
  position: absolute;
  left: 125px;
  top: 149px;
  display: grid;
  grid-template-columns: repeat(6, 140px);
  width: 842px;
  height: 420px;
  background: #fff;
  border: 2px solid #000;
  border-left: 0;
  box-shadow: 4px 4px 0 #b3b3b3;
  font-size: 12px;
  color: #111;
}
.obj {
  border-left: 2px solid #000;
}
.obj-head {
  height: 29px;
  border-bottom: 2px solid #000;
  line-height: 28px;
  text-align: center;
  text-decoration: underline;
}
.obj-body {
  padding: 2px 0 0 1px;
  line-height: 14px;
}
.obj-body p {
  margin: 0;
}
.hscroll {
  position: relative;
  height: 17px;
  flex: none;
  background: #f0f0f0;
}
.arrow-left {
  position: absolute;
  left: 11px;
  top: 4px;
  border: 4px solid transparent;
  border-left-width: 0;
  border-right: 5px solid #555;
}
.hthumb {
  width: 308px;
  height: 13px;
  margin: 2px 0 0 96px;
  background: #bdbdbd;
}

/* things floating over the canvas */
.side-toggle {
  position: absolute;
  left: 0;
  top: 617px;
  width: 26px;
  height: 28px;
  display: flex;
  align-items: center;
  justify-content: center;
  background: #f4f4f4;
  border: 1px solid #ccc;
  border-left: 0;
  border-radius: 0 4px 4px 0;
}
.side-toggle svg, .started-close svg {
  width: 8px;
  height: 12px;
}
.started {
  position: absolute;
  left: 1060px;
  top: 653px;
  width: 194px;
  height: 27px;
  display: flex;
  align-items: center;
  padding-left: 5px;
  background: #d9edf7;
  border: 1px solid #b5d8ea;
  border-bottom: 0;
  font-size: 13px;
  font-weight: bold;
  letter-spacing: 0.1px;
  white-space: nowrap;
  color: #111;
}
.started-up {
  width: 14px;
  height: 10px;
  margin-left: auto;
}
.started-close {
  position: absolute;
  left: 1252px;
  top: 653px;
  width: 28px;
  height: 27px;
  display: flex;
  align-items: center;
  justify-content: center;
  background: #f6f6f6;
  border-radius: 4px 0 0 4px;
  border: 1px solid #ddd;
}

/* windows taskbar */
.taskbar {
  height: 40px;
  flex: none;
  display: flex;
  background: #050608;
  color: #fff;
}
.startbtn {
  width: 48px;
  display: flex;
  align-items: center;
  justify-content: center;
}
.startbtn svg {
  width: 16px;
  height: 16px;
}
.search {
  width: 344px;
  display: flex;
  align-items: center;
  padding: 0 14px 0 10px;
  background: #f2f2f2;
  color: #333;
}
.cortana {
  width: 21px;
  height: 21px;
  border: 3px solid #111;
  border-radius: 50%;
}
.search-text {
  margin-left: 9px;
  font-family: "Open Sans", sans-serif;
  font-size: 14px;
}
.mic {
  width: 12px;
  height: 18px;
  margin-left: auto;
}
.tb-apps {
  display: flex;
  padding-left: 2px;
}
.tbapp {
  position: relative;
  width: 49px;
  display: flex;
  align-items: center;
  justify-content: center;
}
.tbapp svg {
  width: 24px;
  height: 24px;
}
.tbapp-open::after, .tbapp-active::after {
  content: "";
  position: absolute;
  left: 4px;
  right: 4px;
  bottom: 0;
  height: 2px;
  background: #76b9ed;
}
.tbapp-active {
  background: #2f3133;
}
.tbapp-active::after {
  left: 0;
  right: 0;
}
.chrome-ico {
  width: 24px;
  height: 24px;
  display: flex;
  align-items: center;
  justify-content: center;
  border-radius: 50%;
  background: conic-gradient(#e53935 0 115deg, #fbc02d 115deg 235deg, #43a047 235deg 325deg, #e53935 325deg);
}
.chrome-ico i {
  width: 11px;
  height: 11px;
  background: #3f84f0;
  border: 2px solid #fff;
  border-radius: 50%;
}
.word-w {
  position: absolute;
  left: 15px;
  top: 11px;
  font-size: 13px;
  font-weight: bold;
  color: #fff;
}
.tray {
  margin-left: auto;
  display: flex;
  align-items: center;
  padding-right: 8px;
}
.tray-item {
  display: flex;
  align-items: center;
  justify-content: center;
}
.ti-people { width: 40px; }
.ti-people svg { width: 18px; height: 18px; }
.ti-caret { width: 42px; }
.ti-caret svg { width: 13px; height: 7px; }
.ti-cloud { width: 22px; }
.ti-cloud svg { width: 17px; height: 11px; }
.ti-batt { width: 42px; }
.ti-batt svg { width: 16px; height: 11px; }
.clock {
  width: 54px;
  font-family: "Open Sans", sans-serif;
  font-size: 11.500px;
  line-height: 18px;
  text-align: center;
  white-space: nowrap;
}
.ti-notif { width: 50px; }
.ti-notif svg { width: 18px; height: 18px; }
```
